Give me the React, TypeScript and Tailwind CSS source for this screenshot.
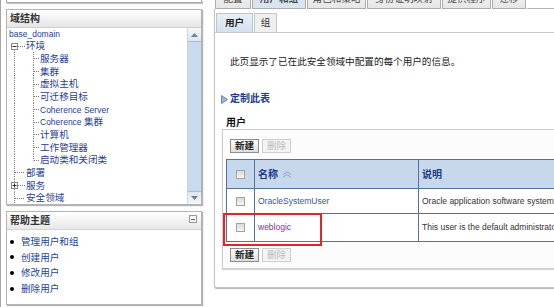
import React from "react";

type TreeRow = {
  label: React.ReactNode;
  level: 0 | 1 | 2;
  box?: "minus" | "plus";
  first?: boolean;
  last?: boolean;
};

const tree: TreeRow[] = [
  { label: <span className="text-[8.5px]">base_domain</span>, level: 0 },
  { label: "环境", level: 1, box: "minus", first: true },
  { label: "服务器", level: 2 },
  { label: "集群", level: 2 },
  { label: "虚拟主机", level: 2 },
  { label: "可迁移目标", level: 2 },
  { label: <span className="text-[8.5px]">Coherence Server</span>, level: 2 },
  {
    label: (
      <>
        <span className="text-[8.5px]">Coherence </span>集群
      </>
    ),
    level: 2,
  },
  { label: "计算机", level: 2 },
  { label: "工作管理器", level: 2 },
  { label: "启动类和关闭类", level: 2, last: true },
  { label: "部署", level: 1 },
  { label: "服务", level: 1, box: "plus" },
  { label: "安全领域", level: 1 },
];

const topTabs = [
  { label: "配置", w: "w-[36px]" },
  { label: "用户和组", w: "w-[54px]", active: true },
  { label: "角色和策略", w: "w-[59px]" },
  { label: "身份证明映射", w: "w-[74px]" },
  { label: "提供程序", w: "w-[49px]" },
  { label: "迁移", w: "w-[34px]" },
];

const helpItems = ["管理用户和组", "创建用户", "修改用户", "删除用户"];

// dotted tree connectors for one row
function Connector({ row, h }: { row: TreeRow; h: number }) {
  const mid = Math.round(h / 2) + 0.5;
  const dots = { stroke: "#7d7d7d", strokeWidth: 1, strokeDasharray: "1 1" };
  if (row.level === 1) {
    return (
      <svg width={16} height={h} className="shrink-0">
        <line x1={5.5} y1={row.first ? mid + 3 : 0} x2={5.5} y2={h} {...dots} />
        <line x1={row.box ? 9 : 6} y1={mid} x2={16} y2={mid} {...dots} />
        {row.box && (
          <>
            <rect x={2.5} y={mid - 3} width={6} height={6} fill="#fff" stroke="#8c8c8c" />
            <line x1={3.5} y1={mid} x2={7.5} y2={mid} stroke="#333" />
            {row.box === "plus" && <line x1={5.5} y1={mid - 2} x2={5.5} y2={mid + 2} stroke="#333" />}
          </>
        )}
      </svg>
    );
  }
  if (row.level === 2) {
    return (
      <svg width={30} height={h} className="shrink-0">
        <line x1={5.5} y1={0} x2={5.5} y2={h} {...dots} />
        <line x1={24.5} y1={0} x2={24.5} y2={row.last ? mid : h} {...dots} />
        <line x1={25} y1={mid} x2={30} y2={mid} {...dots} />
      </svg>
    );
  }
  return null;
}

function Checkbox() {
  return <div className="w-[9px] h-[9px] border border-[#a3a3a3] bg-gradient-to-b from-[#dcdcdc] to-[#f4f4f4] mx-auto" />;
}

function Buttons() {
  return (
    <div className="flex gap-[3px] pl-[4px]">
      <div className="w-[29px] h-[14px] flex items-center justify-center border border-[#8e8e8e] bg-gradient-to-b from-white to-[#dedede] text-[9.6px] font-bold text-[#222] leading-none">
        新建
      </div>
      <div className="w-[29px] h-[14px] flex items-center justify-center border border-[#cfcfcf] bg-[#f4f4f4] text-[9.6px] text-[#bdbdbd] leading-none">
        删除
      </div>
    </div>
  );
}

export default function App() {
  return (
    <div className="w-[554px] h-[307px] overflow-hidden bg-white relative flex border-l border-[#a5a5a5] font-['Liberation_Sans','Noto_Sans_CJK_SC',sans-serif] text-[9.6px]">
      {/* Left column */}
      <div className="w-[213px] shrink-0 flex flex-col pl-[5px] pr-[12px]">
        <div className="h-[3px] border-x border-b border-[#a9a9a9] shadow-[1px_1px_1px_rgba(0,0,0,0.25)]" />

        {/* 域结构 */}
        <div className="mt-[6px] h-[196px] border border-[#b4b4b4] shadow-[1px_1px_1px_rgba(0,0,0,0.3)] flex flex-col">
          <div className="h-[18px] shrink-0 border-b border-[#cfcfcf] bg-gradient-to-b from-white to-[#e6e6e6] flex items-center pl-[3px] font-bold text-[10px] text-[#333]">
            域结构
          </div>
          <div className="flex-1 flex min-h-0">
            <div className="flex-1 pl-[2px] overflow-hidden text-[#1f3f93] leading-none">
              {tree.map((row, i) => {
                const h = i === 0 ? 11.6 : 12.7;
                return (
                  <div key={i} className="flex items-center" style={{ height: h }}>
                    <Connector row={row} h={h} />
                    <span className={row.level === 0 ? "" : "ml-px"}>{row.label}</span>
                  </div>
                );
              })}
            </div>
            {/* scrollbar */}
            <div className="w-[14px] shrink-0 flex flex-col border-l border-[#c9d6e6]">
              <div className="h-[14px] flex items-center justify-center bg-gradient-to-b from-[#f5f7fa] to-[#dfe6ef] border-b border-[#a9bbd3]">
                <svg width="7" height="4" viewBox="0 0 7 4">
                  <path d="M0 4 L3.5 0 L7 4 Z" fill="#6f7f96" />
                </svg>
              </div>
              <div className="flex-1 bg-[#c9d9ee]" />
              <div className="h-[13px] flex items-center justify-center bg-gradient-to-b from-[#dfe6ef] to-[#f5f7fa] border-t border-[#a9bbd3]">
                <svg width="7" height="4" viewBox="0 0 7 4">
                  <path d="M0 0 L3.5 4 L7 0 Z" fill="#6f7f96" />
                </svg>
              </div>
            </div>
          </div>
        </div>

        {/* 帮助主题 */}
        <div className="mt-[6px] h-[94px] border border-[#b4b4b4] shadow-[1px_1px_1px_rgba(0,0,0,0.3)] flex flex-col">
          <div className="h-[18px] shrink-0 border-b border-[#d4d4d4] bg-gradient-to-b from-white to-[#e8e8e8] flex items-center justify-between pl-[3px] pr-[4px]">
            <span className="font-bold text-[10px] text-[#333]">帮助主题</span>
            <div className="w-[8px] h-[8px] border border-[#9a9a9a] bg-[#f6f6f6] flex items-center justify-center -mt-[3px]">
              <div className="w-[4px] h-px bg-[#666]" />
            </div>
          </div>
          <div className="pt-[4px] flex flex-col">
            {helpItems.map((t) => (
              <div key={t} className="h-[15.6px] flex items-center">
                <div className="w-[4px] h-[4px] rounded-full bg-black ml-[3px]" />
                <span className="ml-[7px] text-[#23449a] leading-none">{t}</span>
              </div>
            ))}
          </div>
        </div>
      </div>

      {/* Right column */}
      <div className="flex-1 flex flex-col min-w-0">
        {/* top tabs (cut off) */}
        <div className="h-[9px] shrink-0 overflow-hidden flex items-end pl-px">
          {topTabs.map((t) => (
            <div
              key={t.label}
              className={`${t.w} h-[20px] shrink-0 mr-px border border-[#adadad] flex items-center justify-center leading-none text-[#444] ${
                t.active ? "bg-[#d8e4f0] font-bold" : "bg-gradient-to-b from-[#f6f6f6] to-[#e6e6e6]"
              }`}
            >
              {t.label}
            </div>
          ))}
          <div className="flex-1 h-px bg-[#b3b3b3] self-end" />
        </div>

        {/* main panel */}
        <div className="border-l border-b border-[#c4c4c4] shadow-[0_1px_1px_rgba(0,0,0,0.3)] rounded-bl-[3px] pt-[4px] pb-[18px]">
          {/* sub tabs */}
          <div className="h-[20px] border-b-[1.5px] border-[#c9c9c9] flex pl-px gap-px">
            <div className="w-[37px] h-[19px] border border-b-0 border-[#b9c6d4] bg-gradient-to-b from-[#e9f0f7] to-[#d3e0ee] flex items-center justify-center font-bold text-[#222]">
              用户
            </div>
            <div className="w-[23px] h-[19px] border border-b-0 border-[#c8c8c8] bg-[#efefef] flex items-center justify-center text-[#333]">
              组
            </div>
          </div>

          <p className="mt-[23px] pl-[15px] h-[12px] leading-[12px] text-[#222] whitespace-nowrap">
            此页显示了已在此安全领域中配置的每个用户的信息。
          </p>

          <div className="mt-[25px] pl-[6px] h-[12px] flex items-center">
            <svg width="7" height="9" viewBox="0 0 7 9" className="shrink-0">
              <path d="M0.5 0.5 L6.5 4.5 L0.5 8.5 Z" fill="#9db6de" stroke="#6b86b8" />
            </svg>
            <span className="ml-[2px] font-bold text-[10px] text-[#1e3c86] leading-none">定制此表</span>
          </div>

          <div className="mt-[12px] pl-[11px] h-[12px] flex items-center font-bold text-[10px] text-[#111] leading-none">用户</div>

          {/* table box */}
          <div className="ml-[7px] w-[400px] border border-[#cdcdcd] bg-[#fcfcfc] shadow-[0_1px_1px_rgba(0,0,0,0.15)] pt-[9px] pb-[6px] pl-[3px]">
            <Buttons />
            <table className="mt-[6px] border-collapse table-fixed w-[420px]">
              <colgroup>
                <col className="w-[28px]" />
                <col className="w-[164px]" />
                <col className="w-[228px]" />
              </colgroup>
              <thead>
                <tr className="h-[29px] bg-[#c7d8ed]">
                  <th className="border border-[#56719c] p-0">
                    <Checkbox />
                  </th>
                  <th className="border border-[#56719c] text-left pl-[3px] font-bold text-[10px] text-[#1c3a80]">
                    <span className="flex items-center gap-[4px]">
                      名称
                      <svg width="10" height="7" viewBox="0 0 10 7">
                        <path d="M1 3.5 L5 0.8 L9 3.5 M1 6.3 L5 3.6 L9 6.3" fill="none" stroke="#8da2c4" strokeWidth="1" />
                      </svg>
                    </span>
                  </th>
                  <th className="border border-[#56719c] text-left pl-[3px] font-bold text-[10px] text-[#1c3a80]">说明</th>
                </tr>
              </thead>
              <tbody>
                <tr className="h-[25px] bg-white">
                  <td className="border border-[#56719c] p-0">
                    <Checkbox />
                  </td>
                  <td className="border border-[#56719c] pl-[3px] text-[8.5px] text-[#3556ad]">OracleSystemUser</td>
                  <td className="border border-[#56719c] pl-[3px] text-[8.5px] text-[#333] whitespace-nowrap overflow-hidden">
                    Oracle application software system user.
                  </td>
                </tr>
                <tr className="h-[28px] bg-white">
                  <td className="border border-[#56719c] p-0">
                    <Checkbox />
                  </td>
                  <td className="border border-[#56719c] pl-[3px] text-[8.5px] text-[#8b2d9a]">weblogic</td>
                  <td className="border border-[#56719c] pl-[3px] text-[8.5px] text-[#333] whitespace-nowrap overflow-hidden">
                    This user is the default administrator.
                  </td>
                </tr>
              </tbody>
            </table>
            <div className="mt-[6px]">
              <Buttons />
            </div>
          </div>
        </div>
      </div>

      {/* highlight box */}
      <div className="absolute left-[222px] top-[213px] w-[99px] h-[33px] border-2 border-[#e1252a]" />
    </div>
  );
}
